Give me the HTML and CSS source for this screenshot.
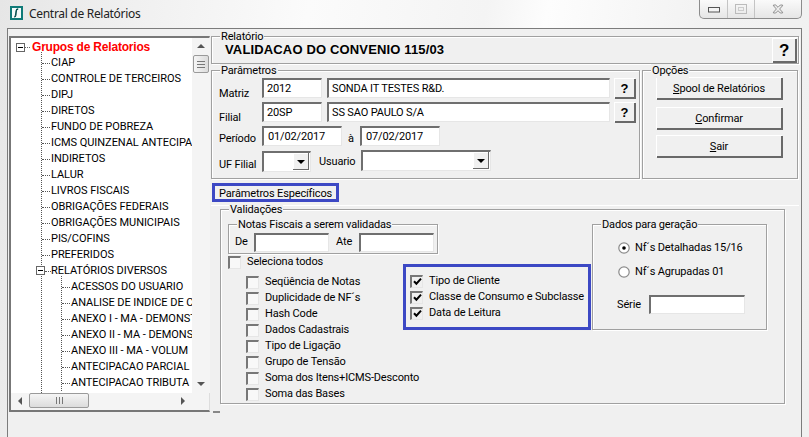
FILE: index.html
```html
<!DOCTYPE html>
<html lang="pt-BR">
<head>
<meta charset="utf-8">
<title>Central de Relatórios</title>
<link rel="stylesheet" href="styles.css">
</head>
<body>
<div class="window">
  <header class="titlebar">
    <svg class="app-icon" width="13" height="14" viewBox="0 0 13 14"><rect x="1" y="1" width="11" height="12" fill="#e4f2f2" stroke="#0f7a78" stroke-width="2"/><rect x="2" y="2" width="9" height="10" fill="#f4fbfb"/><path d="M8.2 3.2C6.8 3 6.4 3.6 6.2 5L5.7 9.2C5.5 10.6 5.2 10.9 4.2 10.8" fill="none" stroke="#064f4f" stroke-width="1.6"/></svg>
    <span class="title-text">Central de Relatórios</span>
    <div class="controls">
      <span class="ctl ctl-min"><svg width="12" height="7" viewBox="0 0 12 7"><rect x="0.5" y="1.5" width="11" height="4.5" fill="#f4f4f4" stroke="#555"/></svg></span>
      <span class="ctl ctl-max"><svg width="12" height="10" viewBox="0 0 12 10"><rect x="0.5" y="0.5" width="11" height="9" fill="none" stroke="#bbb"/><rect x="3.5" y="3.5" width="5" height="3" fill="none" stroke="#ccc"/></svg></span>
      <span class="ctl ctl-close"><svg width="12" height="10" viewBox="0 0 12 10"><path d="M1.5 1h2.2L6 3.3 8.3 1h2.2v.8L7.6 5l2.9 3.2V9H8.3L6 6.7 3.7 9H1.5v-.8L4.4 5 1.5 1.8z" fill="#eee" stroke="#777" stroke-width="0.8"/></svg></span>
    </div>
  </header>

  <div class="client">
    <aside class="tree-pane">
      <div class="tree-view">
        <div class="tree-scroll">
          <div class="root-row"><span class="exp"></span><span class="dash-root"></span><b>Grupos de Relatorios</b></div>
          <ul class="lvl1">
            <li><span>CIAP</span></li>
            <li><span>CONTROLE DE TERCEIROS</span></li>
            <li><span>DIPJ</span></li>
            <li><span>DIRETOS</span></li>
            <li><span>FUNDO DE POBREZA</span></li>
            <li><span>ICMS QUINZENAL ANTECIPA</span></li>
            <li><span>INDIRETOS</span></li>
            <li><span>LALUR</span></li>
            <li><span>LIVROS FISCAIS</span></li>
            <li><span>OBRIGAÇÕES FEDERAIS</span></li>
            <li><span>OBRIGAÇÕES MUNICIPAIS</span></li>
            <li><span>PIS/COFINS</span></li>
            <li><span>PREFERIDOS</span></li>
            <li class="branch"><span class="exp exp-inner"></span><span>RELATÓRIOS DIVERSOS</span></li>
          </ul>
          <ul class="lvl2">
            <li><span>ACESSOS DO USUARIO</span></li>
            <li><span>ANALISE DE INDICE DE C</span></li>
            <li><span>ANEXO I - MA - DEMONST</span></li>
            <li><span>ANEXO II - MA - DEMONS</span></li>
            <li><span>ANEXO III - MA - VOLUM</span></li>
            <li><span>ANTECIPACAO PARCIAL</span></li>
            <li><span>ANTECIPACAO TRIBUTA</span></li>
          </ul>
        </div>
        <div class="vscroll">
          <span class="arrow up"></span>
          <span class="vthumb"><i></i></span>
          <span class="grow"></span>
          <span class="arrow down"></span>
        </div>
        <div class="hscroll">
          <span class="arrow left"></span>
          <span class="hthumb"><i></i></span>
          <span class="grow"></span>
          <span class="arrow right"></span>
        </div>
      </div>
    </aside>

    <main class="main-pane">
      <section class="group group-rel">
        <span class="legend">Relatório</span>
        <strong class="report-name">VALIDACAO DO CONVENIO 115/03</strong>
        <button class="btn btn-help-big">?</button>
      </section>

      <div class="top-row">
        <section class="group group-par">
          <span class="legend">Parâmetros</span>
          <div class="row row-1">
            <label class="lbl lbl-low">Matriz</label>
            <span class="input w60">2012</span>
            <span class="input w283">SONDA IT TESTES R&amp;D.</span>
            <button class="btn btn-q">?</button>
          </div>
          <div class="row row-2">
            <label class="lbl lbl-low">Filial</label>
            <span class="input w60">20SP</span>
            <span class="input w283">SS SAO PAULO S/A</span>
            <button class="btn btn-q">?</button>
          </div>
          <div class="row row-3">
            <label class="lbl lbl-mid">Período</label>
            <span class="input w80 date">01/02/2017</span>
            <span class="a-lbl">à</span>
            <span class="input w80 date">07/02/2017</span>
          </div>
          <div class="row row-4">
            <label class="lbl lbl-uf">UF Filial</label>
            <span class="combo w49"><i></i></span>
            <span class="usr-lbl">Usuario</span>
            <span class="combo w130"><i></i></span>
          </div>
        </section>
        <section class="group group-opt">
          <span class="legend legend-opt">Opções</span>
          <button class="btn btn-opt"><u>S</u>pool de Relatórios</button>
          <button class="btn btn-opt"><u>C</u>onfirmar</button>
          <button class="btn btn-opt"><u>S</u>air</button>
        </section>
      </div>

      <div class="tab-strip"><span class="tab-label">Parâmetros Específicos</span></div>

      <section class="group group-val">
        <span class="legend">Validações</span>
        <div class="val-grid">
          <div class="group group-nf">
            <span class="legend">Notas Fiscais a serem validadas</span>
            <span class="de">De</span><span class="input w74 h18"></span>
            <span class="ate">Ate</span><span class="input w74 h18"></span>
          </div>
          <div class="group group-dados">
            <span class="legend">Dados para geração</span>
            <div class="radio-row"><svg class="radio" width="12" height="12" viewBox="0 0 12 12"><circle cx="6" cy="6" r="5.2" fill="#fff" stroke="#8a8a8a" stroke-width="1.2"/><circle cx="6" cy="6" r="1.8" fill="#000"/></svg><span>Nf´s Detalhadas 15/16</span></div>
            <div class="radio-row"><svg class="radio" width="12" height="12" viewBox="0 0 12 12"><circle cx="6" cy="6" r="5.2" fill="#fff" stroke="#8a8a8a" stroke-width="1.2"/></svg><span>Nf´s Agrupadas 01</span></div>
            <div class="serie-row"><span class="serie-lbl">Série</span><span class="input w96 h18"></span></div>
          </div>
          <div class="checks">
            <div class="check top"><span class="cb"></span><span>Seleciona todos</span></div>
            <div class="sub">
              <div class="check"><span class="cb"></span><span>Seqüência de Notas</span></div>
              <div class="check"><span class="cb"></span><span>Duplicidade de NF´s</span></div>
              <div class="check"><span class="cb"></span><span>Hash Code</span></div>
              <div class="check"><span class="cb"></span><span>Dados Cadastrais</span></div>
              <div class="check"><span class="cb"></span><span>Tipo de Ligação</span></div>
              <div class="check"><span class="cb"></span><span>Grupo de Tensão</span></div>
              <div class="check"><span class="cb"></span><span>Soma dos Itens+ICMS-Desconto</span></div>
              <div class="check"><span class="cb"></span><span>Soma das Bases</span></div>
            </div>
          </div>
          <div class="blue-box">
            <div class="check"><span class="cb on"><svg width="9" height="9" viewBox="0 0 9 9"><path d="M1 4.2l2.4 2.5L8 1.6" fill="none" stroke="#000" stroke-width="2"/></svg></span><span>Tipo de Cliente</span></div>
            <div class="check"><span class="cb on"><svg width="9" height="9" viewBox="0 0 9 9"><path d="M1 4.2l2.4 2.5L8 1.6" fill="none" stroke="#000" stroke-width="2"/></svg></span><span>Classe de Consumo e Subclasse</span></div>
            <div class="check"><span class="cb on"><svg width="9" height="9" viewBox="0 0 9 9"><path d="M1 4.2l2.4 2.5L8 1.6" fill="none" stroke="#000" stroke-width="2"/></svg></span><span>Data de Leitura</span></div>
          </div>
        </div>
      </section>
      <span class="tick"></span>
    </main>
  </div>
</div>
</body>
</html>
```
FILE: styles.css
```css
* { box-sizing: border-box; }
html, body { margin: 0; padding: 0; }
body {
  width: 809px; height: 437px; overflow: hidden;
  font: 11px/14px Roboto, "Liberation Sans", Arial, sans-serif;
  letter-spacing: -0.15px;
  color: #000;
  background: #f0f0f0;
}
.window {
  width: 809px; height: 437px; padding: 0 7px 0 7px;
  background: linear-gradient(100deg, #e6e6e6 0, #eeeeee 12%, #fbfbfb 35%, #f4f4f4 55%, #fdfdfd 62%, #f2f2f2 80%, #f0f0f0 100%);
}
.titlebar { height: 28px; display: flex; align-items: flex-start; position: relative; padding-left: 3px; }
.app-icon { margin-top: 6px; }
.title-text { font: 12px/16px "Noto Sans", "Liberation Sans", sans-serif; letter-spacing: -0.3px; margin: 6px 0 0 6px; color: #222; }
.controls {
  position: absolute; top: 0; left: 692px; width: 103px; height: 19px;
  display: flex; border: 1px solid #8c8c8c; border-top: 0; border-radius: 0 0 5px 5px;
  background: linear-gradient(#fafafa, #e6e6e6);
}
.ctl { display: flex; align-items: center; justify-content: center; border-right: 1px solid #c4c4c4; }
.ctl-min { width: 28px; }
.ctl-max { width: 27px; }
.ctl-close { flex: 1; border-right: 0; }

.client {
  width: 795px; height: 409px; display: flex;
  border: 1px solid #7c7c7c; border-bottom: 0; background: #f0f0f0;
}
.tree-pane { width: 203px; height: 383px; margin-top: 7px; padding-left: 1px; flex: none; }
.tree-view {
  width: 201px; height: 376px; display: grid;
  grid-template-columns: 181px 18px; grid-template-rows: 355px 15px;
  border-top: 2px solid #777; border-left: 2px solid #777;
  border-bottom: 2px solid #777; border-right: 1px solid #ddd;
  background: #f4f4f4;
}
.tree-scroll { background: #fff; overflow: hidden; white-space: nowrap; letter-spacing: -0.05px; padding-top: 1px; }
.root-row { height: 16px; display: flex; align-items: center; padding-left: 5px; }
.root-row b { color: #f00; font: bold 12px/14px "Liberation Sans", sans-serif; letter-spacing: -0.2px; margin-left: 2px; }
.exp {
  width: 9px; height: 9px; border: 1px solid #666; flex: none; position: relative; background: #fff;
}
.exp::after { content: ""; position: absolute; left: 1px; top: 3px; width: 5px; height: 1px; background: #000; }
.dash-root { width: 5px; border-top: 1px dotted #666; }
ul { list-style: none; margin: 0; padding: 0; position: relative; }
li { height: 16px; display: flex; align-items: center; position: relative; }
.lvl1 { padding-left: 40px; }
.lvl1::before { content: ""; position: absolute; left: 30px; top: -3px; bottom: -120px; border-left: 1px dotted #555; }
.lvl1 li::before { content: ""; width: 8px; border-top: 1px dotted #555; margin: 0 1px 0 -9px; flex: none; }
.lvl1 li.branch::before { width: 6px; margin: 0 0 0 -6px; }
.exp-inner { position: absolute; left: -15px; top: 3px; z-index: 1; }
.lvl2 { padding-left: 61px; }
.lvl2::before { content: ""; position: absolute; left: 50px; top: -3px; bottom: 0; border-left: 1px dotted #555; }
.lvl2 li::before { content: ""; width: 8px; border-top: 1px dotted #555; margin: 0 1px 0 -10px; flex: none; }

.vscroll { grid-column: 2; grid-row: 1; display: flex; flex-direction: column; align-items: center; background: #f4f4f4; }
.hscroll { grid-column: 1; grid-row: 2; display: flex; align-items: center; background: #f4f4f4; }
.grow { flex: 1; }
.arrow { flex: none; width: 0; height: 0; border: 4px solid transparent; }
.arrow.up { border-bottom: 4px solid #555; border-top: 0; margin-top: 6px; }
.arrow.down { border-top: 4px solid #555; border-bottom: 0; margin-bottom: 7px; }
.arrow.left { border-right: 4px solid #555; border-left: 0; margin-left: 7px; }
.arrow.right { border-left: 4px solid #555; border-right: 0; margin-right: 7px; }
.vthumb {
  width: 16px; height: 18px; margin-top: 7px; border: 1px solid #9a9a9a; border-radius: 2px;
  background: linear-gradient(90deg, #f5f5f5, #dcdcdc); display: flex; align-items: center; justify-content: center;
}
.vthumb i { width: 8px; height: 7px; border-top: 1px solid #777; border-bottom: 1px solid #777; background: linear-gradient(#777, #777) center/100% 1px no-repeat; }
.hthumb {
  width: 60px; height: 15px; margin-left: 7px; border: 1px solid #9a9a9a; border-radius: 2px;
  background: linear-gradient(#f5f5f5, #dcdcdc); display: flex; align-items: center; justify-content: center;
}
.hthumb i { width: 7px; height: 7px; border-left: 1px solid #777; border-right: 1px solid #777; background: linear-gradient(#777, #777) center/1px 100% no-repeat; }

.main-pane { width: 590px; flex: none; padding: 7px 0 0 0; position: relative; }

.group {
  position: relative; border: 1px solid #a0a0a0; box-shadow: 1px 1px 0 #fff, inset 1px 1px 0 #fff;
}
.legend {
  position: absolute; left: 8px; top: -7px; padding: 0 1px; height: 14px; line-height: 14px;
  background: #f0f0f0; white-space: nowrap;
}
.group-rel { width: 588px; height: 28px; display: flex; align-items: center; padding: 0 2px 0 13px; }
.report-name { font: bold 13px/16px "Liberation Sans", sans-serif; letter-spacing: 0.15px; flex: 1; }
.btn {
  font: inherit; color: #000; letter-spacing: inherit; padding: 1px 0 0; background: #f0f0f0; border: 0;
  box-shadow: inset 1px 1px 0 #fff, inset -1px -1px 0 #696969, 1px 1px 0 #696969;
}
.btn-help-big { width: 24px; height: 24px; font: bold 17px/20px "Liberation Sans", sans-serif; }
.top-row { display: flex; gap: 2px; margin-top: 6px; }
.group-par { width: 429px; height: 109px; padding: 7px 0 0 7px; }
.row { display: flex; align-items: flex-start; }
.row-1, .row-2 { height: 20px; margin-bottom: 4px; }
.row-3 { height: 20px; margin-bottom: 5px; }
.lbl { width: 43px; flex: none; white-space: nowrap; }
.lbl-low { padding-top: 9px; }
.lbl-mid { padding-top: 6px; }
.lbl-uf { padding-top: 7px; }
.input {
  display: block; height: 20px; flex: none; background: #fff; white-space: nowrap; padding: 2px 0 0 3px;
  border-top: 2px solid #6f6f6f; border-left: 2px solid #6f6f6f;
  border-bottom: 1px solid #e6e6e6; border-right: 1px solid #e6e6e6;
}
.date { padding-left: 4px; }
.w60 { width: 60px; margin-right: 5px; }
.w283 { width: 283px; margin-right: 4px; }
.w80 { width: 80px; }
.w74 { width: 75px; }
.w96 { width: 96px; }
.h18 { height: 19px; }
.btn-q { width: 21px; height: 20px; font: bold 13px/18px "Liberation Sans", sans-serif; flex: none; }
.a-lbl { width: 18px; text-align: center; padding-top: 6px; flex: none; }
.combo {
  display: block; height: 21px; position: relative; background: #fff; flex: none;
  border-top: 2px solid #6f6f6f; border-left: 2px solid #6f6f6f;
  border-bottom: 1px solid #e6e6e6; border-right: 1px solid #e6e6e6;
}
.combo i {
  position: absolute; right: 1px; top: 0; bottom: 1px; width: 16px; background: #f0f0f0;
  box-shadow: inset -1px -1px 0 #696969, inset 1px 1px 0 #fff;
}
.combo i::after {
  content: ""; position: absolute; left: 4px; top: 7px; border: 4px solid transparent; border-top: 4px solid #000; border-bottom: 0;
}
.w49 { width: 49px; }
.w130 { width: 130px; margin-top: -1px; }
.usr-lbl { width: 50px; padding: 4px 0 0 8px; flex: none; }

.group-opt { width: 156px; height: 109px; padding: 6px 0 0 13px; display: flex; flex-direction: column; align-items: flex-start; }
.legend-opt { left: 8px; }
.btn-opt { width: 126px; height: 22px; flex: none; margin-bottom: 8px; }
.btn-opt:nth-of-type(2) { margin-bottom: 6px; }

.tab-strip { height: 23px; margin-top: 4px; border-bottom: 1px solid #fff; display: flex; align-items: flex-start; width: 588px; }
.tab-label {
  width: 127px; height: 19px; margin-left: 1px; padding: 2px 0 0 4px; line-height: 12px;
  border: 3px solid #3c48c4; white-space: nowrap;
}
.group-val { width: 565px; height: 195px; margin: 3px 0 0 9px; padding: 14px 0 0 7px; }
.val-grid { display: grid; grid-template-columns: 175px 189px 173px; grid-template-rows: 30px 1fr; align-items: start; }
.group-nf { grid-column: 1 / span 2; width: 210px; height: 30px; display: flex; align-items: center; padding: 6px 0 0 6px; }
.de { width: 19px; flex: none; }
.ate { width: 23px; margin-left: 7px; flex: none; }
.group-dados { grid-column: 3; grid-row: 1 / span 2; width: 175px; height: 106px; padding: 16px 0 0 25px; }
.radio-row { display: flex; align-items: center; gap: 5px; height: 14px; margin-bottom: 10px; }
.serie-row { display: flex; align-items: center; margin: 16px 0 0 -1px; }
.serie-lbl { width: 32px; flex: none; }
.checks { grid-column: 1; grid-row: 2; }
.check { display: flex; align-items: center; height: 16px; gap: 6px; white-space: nowrap; }
.cb {
  width: 13px; height: 13px; flex: none; background: #f8f8f8; display: flex; align-items: center; justify-content: center;
  border-top: 2px solid #777; border-left: 2px solid #777; border-bottom: 1px solid #e6e6e6; border-right: 1px solid #e6e6e6;
}
.cb.on { background: #f0f0f0; }
.sub { padding: 4px 0 0 18px; }
.blue-box {
  grid-column: 2; grid-row: 2; width: 188px; height: 66px; margin-top: 10px; border: 3px solid #3c48c4; padding: 6px 0 0 4px;
}
.tick { position: absolute; left: 2px; top: 382px; width: 7px; height: 2px; background: #888; }
```
